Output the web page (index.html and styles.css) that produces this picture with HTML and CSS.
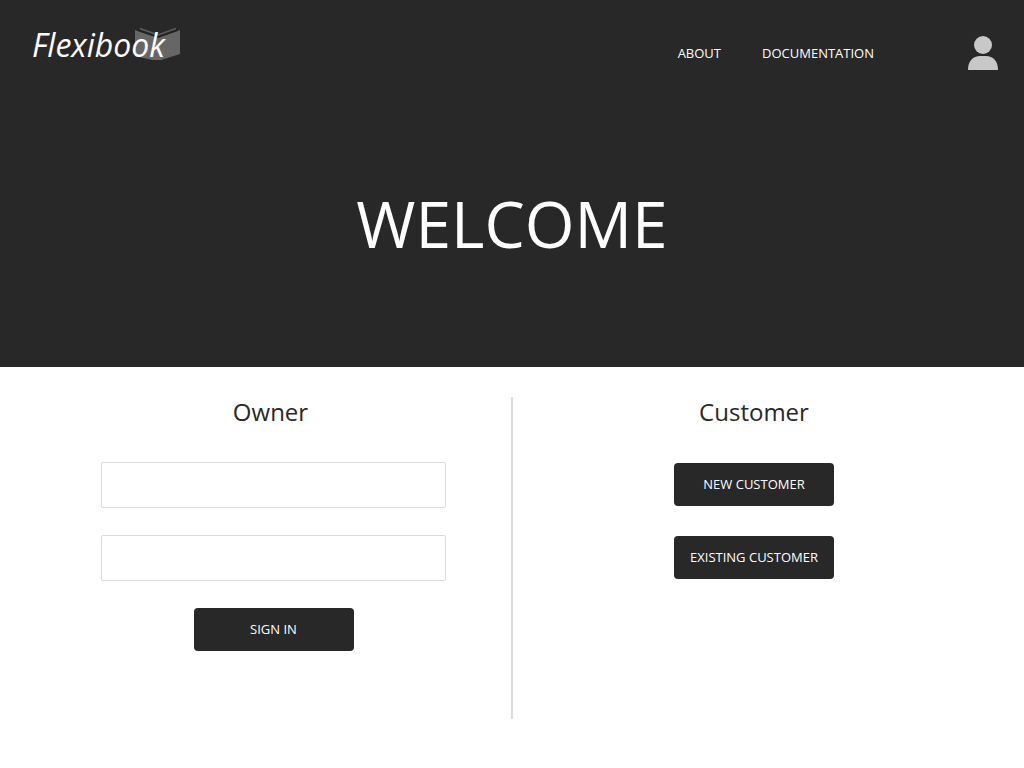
FILE: index.html
```html
<!DOCTYPE html>
<html lang="en">
<head>
<meta charset="utf-8">
<meta name="viewport" content="width=device-width, initial-scale=1">
<title>Flexibook</title>
<link rel="stylesheet" href="styles.css">
</head>
<body>
<header class="hero">
  <div class="topbar">
    <a class="logo" href="#">
      <svg class="logo-book" viewBox="0 0 46 34" aria-hidden="true">
        <path fill="#666" d="M1 3 24 11 46 3V27L27 33H18L1 29Z"/>
        <path fill="none" stroke="#222" stroke-width="1.5" d="M3 3 24 10 44 3"/>
        <path fill="none" stroke="#5c5c5c" stroke-width="1.5" d="M6 1.500 24 8 42 1.500"/>
      </svg>
      <span class="logo-name">Flexibook</span>
    </a>
    <nav class="nav">
      <a href="#">ABOUT</a>
      <a href="#">DOCUMENTATION</a>
    </nav>
    <button class="account" type="button" aria-label="Account">
      <svg viewBox="0 0 30 34" aria-hidden="true">
        <circle cx="15" cy="9" r="9" fill="#c8c8c8"/>
        <path fill="#c8c8c8" d="M0 34C0 25 5 20 12 20H18C25 20 30 25 30 34Z"/>
      </svg>
    </button>
  </div>
  <h1 class="welcome">WELCOME</h1>
</header>
<main class="panels">
  <section class="panel owner">
    <h2 class="panel-title">Owner</h2>
    <form class="sign-in">
      <input class="field" type="text" aria-label="Username">
      <input class="field" type="password" aria-label="Password">
      <button class="button" type="button">SIGN IN</button>
    </form>
  </section>
  <div class="divider"></div>
  <section class="panel customer">
    <h2 class="panel-title">Customer</h2>
    <div class="choices">
      <button class="button" type="button">NEW CUSTOMER</button>
      <button class="button" type="button">EXISTING CUSTOMER</button>
    </div>
  </section>
</main>
</body>
</html>
```

FILE: styles.css
```css
* { box-sizing: border-box; }

body {
  margin: 0;
  background: #fff;
  color: #282828;
  font-family: "Open Sans", sans-serif;
  font-size: 13px;
}

.hero {
  padding-bottom: 99px;
  background: #282828;
  color: #fff;
}

.topbar {
  display: flex;
  align-items: center;
  height: 106px;
  padding: 0 26px 0 32px;
}

.logo {
  position: relative;
  width: 148px;
  height: 50px;
  margin-bottom: 16px;
  color: #fff;
  text-decoration: none;
}

.logo-book {
  position: absolute;
  top: 7px;
  right: 0;
  width: 46px;
  height: 34px;
}

.logo-name {
  position: relative;
  font-family: "Bradley Hand ITC", "Segoe Script", "Brush Script MT", "Open Sans", cursive;
  font-size: 32px;
  font-style: italic;
  line-height: 50px;
}

.nav {
  display: flex;
  gap: 41px;
  margin-left: auto;
}

.nav a {
  color: #fff;
  text-decoration: none;
}

.account {
  width: 30px;
  height: 34px;
  margin-left: 94px;
  padding: 0;
  border: 0;
  background: none;
}

.account svg {
  display: block;
  width: 100%;
}

.welcome {
  margin: 0;
  padding-top: 74px;
  font-size: 64px;
  font-weight: 400;
  line-height: 88px;
  text-align: center;
}

.panels {
  display: grid;
  grid-template-columns: 1fr 2px 1fr;
  padding-top: 30px;
}

.panel {
  min-height: 322px;
}

.divider {
  background: #dcdcdc;
}

.owner {
  padding: 0 65px 0 101px;
}

.customer {
  padding-right: 29px;
}

.panel-title {
  margin: 0 0 35px;
  font-size: 24px;
  font-weight: 400;
  line-height: 30px;
  text-align: center;
}

.owner .panel-title {
  padding-right: 6px;
}

.sign-in,
.choices {
  display: flex;
  flex-direction: column;
  align-items: center;
  gap: 27px;
}

.choices {
  gap: 30px;
  padding-top: 1px;
}

.field {
  width: 100%;
  height: 46px;
  padding: 0 12px;
  border: 1px solid #dcdcdc;
  border-radius: 2px;
  background: #fff;
  font: inherit;
}

.button {
  width: 160px;
  height: 43px;
  padding: 0 0 2px;
  border: 0;
  border-radius: 4px;
  background: #282828;
  color: #fff;
  font: inherit;
}
```
